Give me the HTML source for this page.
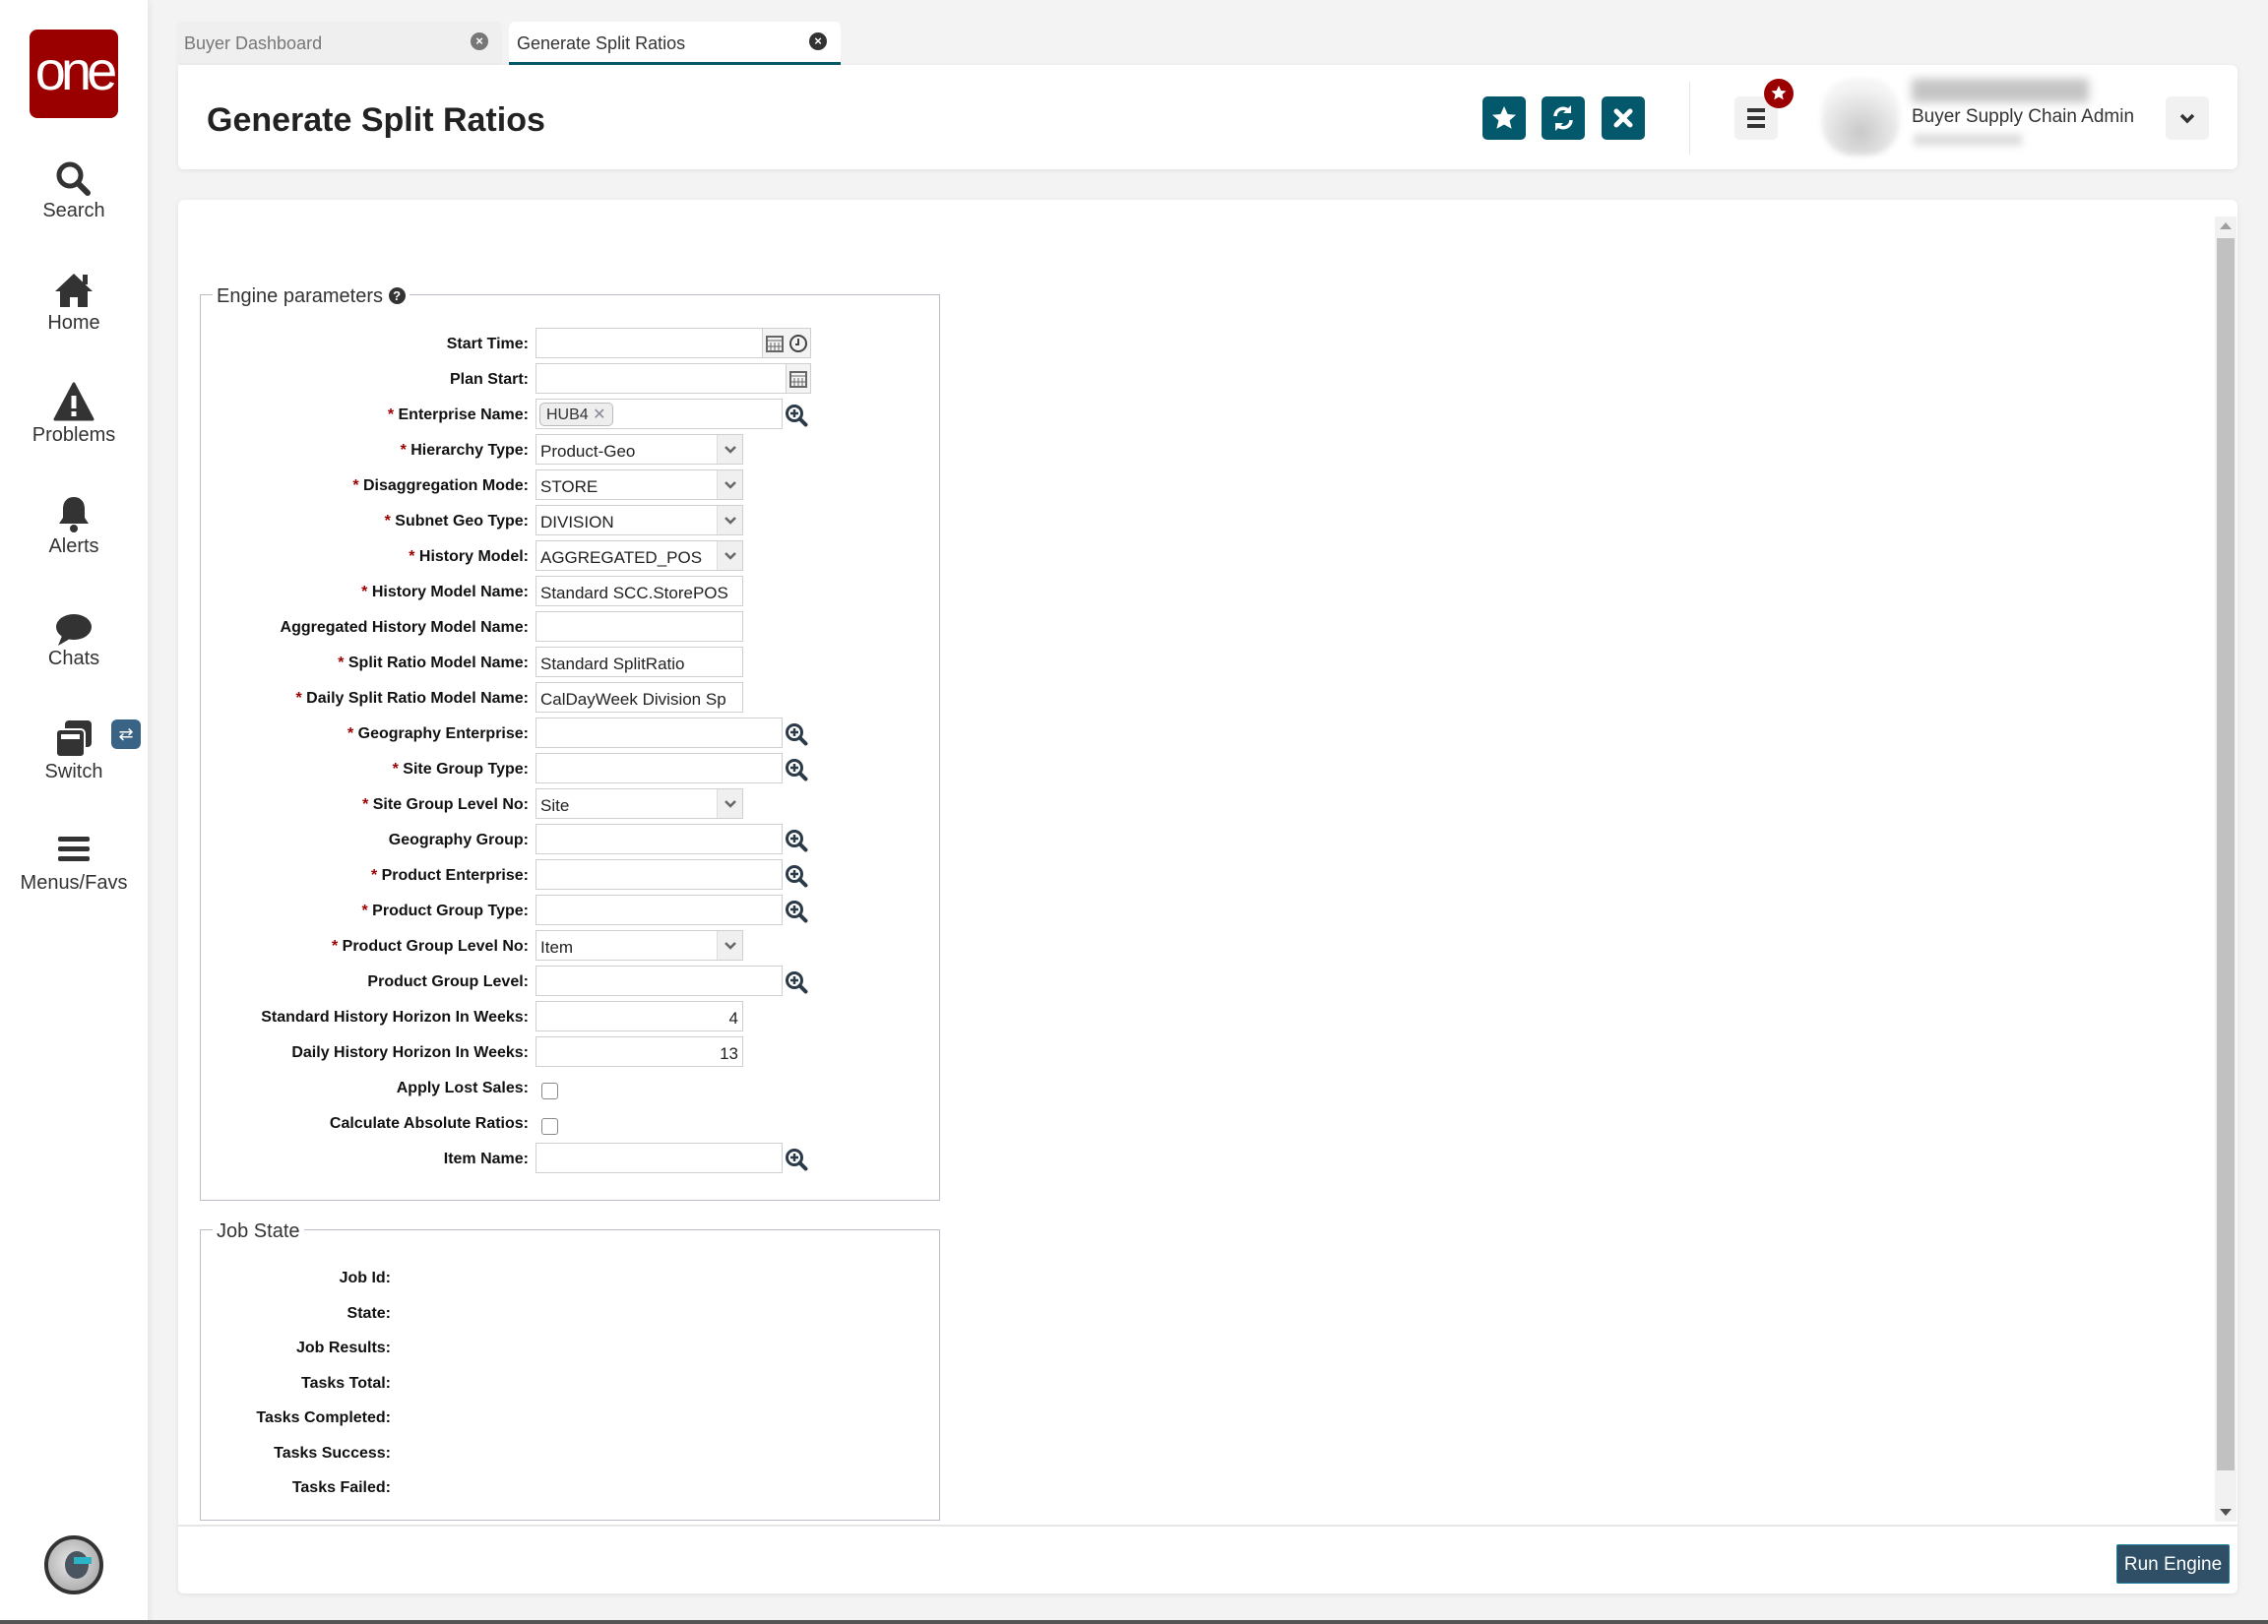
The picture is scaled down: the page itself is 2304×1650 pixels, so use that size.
<!DOCTYPE html>
<html><head><meta charset="utf-8"><style>
*{box-sizing:border-box;margin:0;padding:0}
body{width:2304px;height:1650px;background:#f3f3f3;font-family:"Liberation Sans",sans-serif;color:#222;position:relative;overflow:hidden}
.abs{position:absolute}
.side{left:0;top:0;width:150px;height:1650px;background:#fff;box-shadow:2px 0 6px rgba(0,0,0,.06)}
.nav{position:absolute;left:0;width:150px;text-align:center;font-size:20px;color:#333;margin-top:3px}
.tab{position:absolute;top:22px;height:44px;font-size:18px;color:#777;padding:12px 8px 8px;border-radius:6px 6px 0 0}
.tabx{position:absolute;right:14px;top:11px;width:18px;height:18px;border-radius:50%;background:#777;color:#fff;font-size:13px;line-height:18px;text-align:center;font-weight:bold}
.card{position:absolute;background:#fff;border-radius:6px;box-shadow:0 1px 6px rgba(0,0,0,.08)}
.btn{position:absolute;top:98px;width:44px;height:44px;border-radius:5px;background:#03586b}
.lbl{position:absolute;right:1767px;font-size:16px;font-weight:bold;color:#111;white-space:nowrap;text-align:right;margin-top:3px}
.req{color:#a00000}
.inp{position:absolute;left:544px;height:31px;border:1px solid #cfcfcf;background:#fff;font-size:17px;padding:7px 4px 3px;color:#222;white-space:nowrap;overflow:hidden;margin-top:1px}
.sel{width:211px}
.arr{position:absolute;right:0;top:0;width:26px;height:29px;background:#f0f0f0;border-left:1px solid #ddd}
.txt{width:211px}
.lk{width:251px}
.mag{position:absolute;left:797px;margin-top:1px}
fieldset{position:absolute;border:1px solid #bdbdca;}
legend{font-size:20px;color:#333;padding:4px 4px 0;margin-left:12px}
.js{position:absolute;right:1907px;font-size:16px;font-weight:bold;color:#111;margin-top:3px}
.cb{position:absolute;left:550px;width:17px;height:17px;border:1px solid #888;border-radius:3px;background:#fff}
</style></head><body>
<div class="abs side"></div>
<div class="abs" style="left:30px;top:30px;width:90px;height:90px;background:#9b0000;border-radius:8px;color:#fff;font-size:56px;text-align:center;line-height:84px;letter-spacing:-5px;font-family:'Liberation Sans',sans-serif">one</div>
<svg class="abs" style="left:55px;top:162px" width="40" height="40" viewBox="0 0 40 40"><circle cx="16" cy="16" r="11" fill="none" stroke="#333" stroke-width="5"/><path d="M24 24l10 10" stroke="#333" stroke-width="6" stroke-linecap="round"/></svg>
<div class="nav" style="top:200px">Search</div>
<svg class="abs" style="left:54px;top:276px" width="42" height="38" viewBox="0 0 42 38"><path d="M21 2L2 20h5v16h10V26h8v10h10V20h5z" fill="#333"/><rect x="30" y="3" width="5" height="10" fill="#333"/></svg>
<div class="nav" style="top:314px">Home</div>
<svg class="abs" style="left:54px;top:388px" width="42" height="40" viewBox="0 0 42 40"><path d="M21 2L2 38h38z" fill="#333" stroke="#333" stroke-width="3" stroke-linejoin="round"/><rect x="18.5" y="14" width="5" height="13" fill="#fff"/><rect x="18.5" y="30" width="5" height="5" fill="#fff"/></svg>
<div class="nav" style="top:428px">Problems</div>
<svg class="abs" style="left:58px;top:502px" width="34" height="40" viewBox="0 0 34 40"><path d="M17 3c-7 0-11 5-11 12v9l-4 6h30l-4-6v-9C28 8 24 3 17 3z" fill="#333"/><circle cx="17" cy="35" r="4" fill="#333"/></svg>
<div class="nav" style="top:541px">Alerts</div>
<svg class="abs" style="left:55px;top:622px" width="40" height="36" viewBox="0 0 40 36"><ellipse cx="20" cy="15" rx="18" ry="13" fill="#333"/><path d="M8 24l-4 10 12-7z" fill="#333"/></svg>
<div class="nav" style="top:655px">Chats</div>
<svg class="abs" style="left:55px;top:730px" width="40" height="40" viewBox="0 0 40 40"><rect x="11" y="2" width="27" height="27" rx="4" fill="#333"/><rect x="2" y="11" width="29" height="28" rx="4" fill="#333" stroke="#fff" stroke-width="2"/><rect x="7" y="16" width="19" height="5" fill="#fff"/></svg>
<div class="abs" style="left:113px;top:731px;width:30px;height:30px;background:#3a6486;border-radius:6px;color:#fff;font-size:18px;text-align:center;line-height:30px">⇄</div>
<div class="nav" style="top:770px">Switch</div>
<svg class="abs" style="left:58px;top:848px" width="34" height="30" viewBox="0 0 34 30"><rect x="1" y="2" width="32" height="5" rx="2" fill="#333"/><rect x="1" y="12" width="32" height="5" rx="2" fill="#333"/><rect x="1" y="22" width="32" height="5" rx="2" fill="#333"/></svg>
<div class="nav" style="top:883px">Menus/Favs</div>
<div class="abs" style="left:45px;top:1560px;width:60px;height:60px;border-radius:50%;background:radial-gradient(circle at 45% 45%,#e8e8e8,#9a9a9a);border:4px solid #333"><div style="position:absolute;left:17px;top:12px;width:24px;height:28px;border-radius:50%;background:#4a5560"></div><div style="position:absolute;left:26px;top:18px;width:18px;height:7px;background:#2bb4c8"></div></div>
<div class="abs" style="left:0;top:1646px;width:2304px;height:4px;background:#555"></div>

<div class="tab" style="left:179px;width:331px;background:#efefef">Buyer Dashboard<div class="tabx">×</div></div>
<div class="tab" style="left:517px;width:337px;background:#fff;color:#333;border-bottom:3px solid #075a6a">Generate Split Ratios<div class="tabx" style="background:#333">×</div></div>

<div class="card" style="left:181px;top:66px;width:2092px;height:106px;border-radius:0 6px 6px 6px"></div>
<div class="abs" style="left:210px;top:103px;font-size:34px;font-weight:bold;color:#222">Generate Split Ratios</div>
<div class="btn" style="left:1506px"><svg width="44" height="44" viewBox="0 0 44 44"><path d="M22 10l3.6 8 8.4.8-6.4 5.6 2 8.4L22 28.5 14.4 32.8l2-8.4L10 18.8l8.4-.8z" fill="#fff"/></svg></div>
<div class="btn" style="left:1566px"><svg width="44" height="44" viewBox="0 0 44 44"><path d="M14 20a8 8 0 0 1 14-5M30 24a8 8 0 0 1-14 5" fill="none" stroke="#fff" stroke-width="3.5"/><path d="M30 9v8h-8z M14 35v-8h8z" fill="#fff"/></svg></div>
<div class="btn" style="left:1627px"><svg width="44" height="44" viewBox="0 0 44 44"><path d="M15 15l14 14M29 15L15 29" stroke="#fff" stroke-width="5" stroke-linecap="round"/></svg></div>
<div class="abs" style="left:1716px;top:83px;width:1px;height:74px;background:#e4e4e4"></div>
<div class="abs" style="left:1762px;top:98px;width:44px;height:44px;background:#f1f1f1;border-radius:5px"><svg width="44" height="44" viewBox="0 0 44 44"><rect x="13" y="12" width="18" height="4" fill="#333"/><rect x="13" y="20" width="18" height="4" fill="#333"/><rect x="13" y="28" width="18" height="4" fill="#333"/></svg></div>
<div class="abs" style="left:1792px;top:80px;width:30px;height:30px;border-radius:50%;background:#9b0000"><svg width="30" height="30" viewBox="0 0 30 30"><path d="M15 7l2.3 5 5.2.5-4 3.5 1.2 5.2L15 18.5l-4.7 2.7 1.2-5.2-4-3.5 5.2-.5z" fill="#fff"/></svg></div>
<div class="abs" style="left:1851px;top:80px;width:78px;height:78px;border-radius:40%;background:radial-gradient(circle at 50% 70%,#c8c8c8,#f4f4f4 70%);filter:blur(3px)"></div>
<div class="abs" style="left:1942px;top:80px;width:180px;height:24px;background:#c4c4c4;filter:blur(5px)"></div>
<div class="abs" style="left:1942px;top:108px;font-size:19px;color:#333">Buyer Supply Chain Admin</div>
<div class="abs" style="left:1944px;top:136px;width:110px;height:12px;background:#ddd;filter:blur(4px)"></div>
<div class="abs" style="left:2200px;top:98px;width:44px;height:44px;background:#f1f1f1;border-radius:5px"><svg width="44" height="44" viewBox="0 0 44 44"><path d="M16 19l6 6 6-6" fill="none" stroke="#333" stroke-width="3.5"/></svg></div>

<div class="card" style="left:181px;top:203px;width:2092px;height:1416px"></div>
<div class="abs" style="left:2250px;top:220px;width:22px;height:1326px;background:#f1f1f1"></div>
<div class="abs" style="left:2252px;top:242px;width:18px;height:1252px;background:#c1c1c1"></div>
<div class="abs" style="left:2255px;top:226px;width:0;height:0;border-left:6px solid transparent;border-right:6px solid transparent;border-bottom:7px solid #a0a0a0"></div>
<div class="abs" style="left:2255px;top:1533px;width:0;height:0;border-left:6px solid transparent;border-right:6px solid transparent;border-top:7px solid #505050"></div>
<div class="abs" style="left:181px;top:1549px;width:2092px;height:2px;background:#e6e6e6"></div>
<div class="abs" style="left:2150px;top:1569px;width:115px;height:40px;background:#2e4f66;border:1px solid #1e7fa0;border-radius:2px;color:#fff;font-size:19px;text-align:center;line-height:40px">Run Engine</div>

<fieldset style="left:203px;top:286px;width:752px;height:934px"><legend>Engine parameters <span style="display:inline-block;width:17px;height:17px;border-radius:50%;background:#333;color:#fff;font-size:13px;text-align:center;line-height:17px;font-weight:bold;vertical-align:2px">?</span></legend></fieldset>

<div class="lbl" style="top:338px">Start Time:</div>
<div class="inp" style="top:332px;width:231px"></div>
<div class="abs" style="left:774px;top:333px;width:50px;height:31px;border:1px solid #cfcfcf;background:#f3f3f3"><svg width="50" height="31"><rect x="4" y="8" width="16" height="15" fill="none" stroke="#666" stroke-width="2"/><path d="M4 12h16M8 14v8M12 14v8M16 14v8M4 18h16" stroke="#666"/><circle cx="36" cy="15" r="8" fill="none" stroke="#444" stroke-width="2"/><path d="M36 10v6h-3" stroke="#444" stroke-width="2" fill="none"/></svg></div>

<div class="lbl" style="top:374px">Plan Start:</div>
<div class="inp" style="top:368px;width:255px"></div>
<div class="abs" style="left:798px;top:369px;width:26px;height:31px;border:1px solid #cfcfcf;background:#f3f3f3"><svg width="26" height="31"><rect x="4" y="8" width="16" height="15" fill="none" stroke="#666" stroke-width="2"/><path d="M4 12h16M8 14v8M12 14v8M16 14v8M4 18h16" stroke="#666"/></svg></div>

<div class="lbl" style="top:410px"><span class="req">*</span> Enterprise Name:</div>
<div class="inp lk" style="top:404px;padding:3px"><span style="display:inline-block;background:#eee;border:1px solid #bbb;border-radius:5px;padding:1px 6px;font-size:16px;color:#333">HUB4 <span style="color:#889">✕</span></span></div>

<svg width="0" height="0" style="position:absolute"><defs><g id="mg"><circle cx="10" cy="10" r="7.5" fill="none" stroke="#2a3a48" stroke-width="3"/><path d="M10 6v8M6 10h8" stroke="#2a3a48" stroke-width="2.5"/><path d="M15.5 15.5l6 6" stroke="#2a3a48" stroke-width="4" stroke-linecap="round"/></g></defs></svg>
<svg class="mag" style="top:409px" width="26" height="26"><use href="#mg"/></svg>

<div class="lbl" style="top:446px"><span class="req">*</span> Hierarchy Type:</div>
<div class="inp sel" style="top:440px">Product-Geo<div class="arr"><svg width="26" height="29"><path d="M8 12l5 5 5-5" fill="none" stroke="#666" stroke-width="2.5"/></svg></div></div>
<div class="lbl" style="top:482px"><span class="req">*</span> Disaggregation Mode:</div>
<div class="inp sel" style="top:476px">STORE<div class="arr"><svg width="26" height="29"><path d="M8 12l5 5 5-5" fill="none" stroke="#666" stroke-width="2.5"/></svg></div></div>
<div class="lbl" style="top:518px"><span class="req">*</span> Subnet Geo Type:</div>
<div class="inp sel" style="top:512px">DIVISION<div class="arr"><svg width="26" height="29"><path d="M8 12l5 5 5-5" fill="none" stroke="#666" stroke-width="2.5"/></svg></div></div>
<div class="lbl" style="top:554px"><span class="req">*</span> History Model:</div>
<div class="inp sel" style="top:548px">AGGREGATED_POS<div class="arr"><svg width="26" height="29"><path d="M8 12l5 5 5-5" fill="none" stroke="#666" stroke-width="2.5"/></svg></div></div>
<div class="lbl" style="top:590px"><span class="req">*</span> History Model Name:</div>
<div class="inp txt" style="top:584px">Standard SCC.StorePOS</div>
<div class="lbl" style="top:626px">Aggregated History Model Name:</div>
<div class="inp txt" style="top:620px"></div>
<div class="lbl" style="top:662px"><span class="req">*</span> Split Ratio Model Name:</div>
<div class="inp txt" style="top:656px">Standard SplitRatio</div>
<div class="lbl" style="top:698px"><span class="req">*</span> Daily Split Ratio Model Name:</div>
<div class="inp txt" style="top:692px">CalDayWeek Division Sp</div>
<div class="lbl" style="top:734px"><span class="req">*</span> Geography Enterprise:</div>
<div class="inp lk" style="top:728px"></div><svg class="mag" style="top:733px" width="26" height="26"><use href="#mg"/></svg>
<div class="lbl" style="top:770px"><span class="req">*</span> Site Group Type:</div>
<div class="inp lk" style="top:764px"></div><svg class="mag" style="top:769px" width="26" height="26"><use href="#mg"/></svg>
<div class="lbl" style="top:806px"><span class="req">*</span> Site Group Level No:</div>
<div class="inp sel" style="top:800px">Site<div class="arr"><svg width="26" height="29"><path d="M8 12l5 5 5-5" fill="none" stroke="#666" stroke-width="2.5"/></svg></div></div>
<div class="lbl" style="top:842px">Geography Group:</div>
<div class="inp lk" style="top:836px"></div><svg class="mag" style="top:841px" width="26" height="26"><use href="#mg"/></svg>
<div class="lbl" style="top:878px"><span class="req">*</span> Product Enterprise:</div>
<div class="inp lk" style="top:872px"></div><svg class="mag" style="top:877px" width="26" height="26"><use href="#mg"/></svg>
<div class="lbl" style="top:914px"><span class="req">*</span> Product Group Type:</div>
<div class="inp lk" style="top:908px"></div><svg class="mag" style="top:913px" width="26" height="26"><use href="#mg"/></svg>
<div class="lbl" style="top:950px"><span class="req">*</span> Product Group Level No:</div>
<div class="inp sel" style="top:944px">Item<div class="arr"><svg width="26" height="29"><path d="M8 12l5 5 5-5" fill="none" stroke="#666" stroke-width="2.5"/></svg></div></div>
<div class="lbl" style="top:986px">Product Group Level:</div>
<div class="inp lk" style="top:980px"></div><svg class="mag" style="top:985px" width="26" height="26"><use href="#mg"/></svg>
<div class="lbl" style="top:1022px">Standard History Horizon In Weeks:</div>
<div class="inp txt" style="top:1016px;text-align:right">4</div>
<div class="lbl" style="top:1058px">Daily History Horizon In Weeks:</div>
<div class="inp txt" style="top:1052px;text-align:right">13</div>
<div class="lbl" style="top:1094px">Apply Lost Sales:</div>
<div class="cb" style="top:1100px"></div>
<div class="lbl" style="top:1130px">Calculate Absolute Ratios:</div>
<div class="cb" style="top:1136px"></div>
<div class="lbl" style="top:1166px">Item Name:</div>
<div class="inp lk" style="top:1160px"></div><svg class="mag" style="top:1165px" width="26" height="26"><use href="#mg"/></svg>

<fieldset style="left:203px;top:1236px;width:752px;height:309px"><legend>Job State</legend></fieldset>
<div class="js" style="top:1287px">Job Id:</div>
<div class="js" style="top:1323px">State:</div>
<div class="js" style="top:1358px">Job Results:</div>
<div class="js" style="top:1394px">Tasks Total:</div>
<div class="js" style="top:1429px">Tasks Completed:</div>
<div class="js" style="top:1465px">Tasks Success:</div>
<div class="js" style="top:1500px">Tasks Failed:</div>
</body></html>
